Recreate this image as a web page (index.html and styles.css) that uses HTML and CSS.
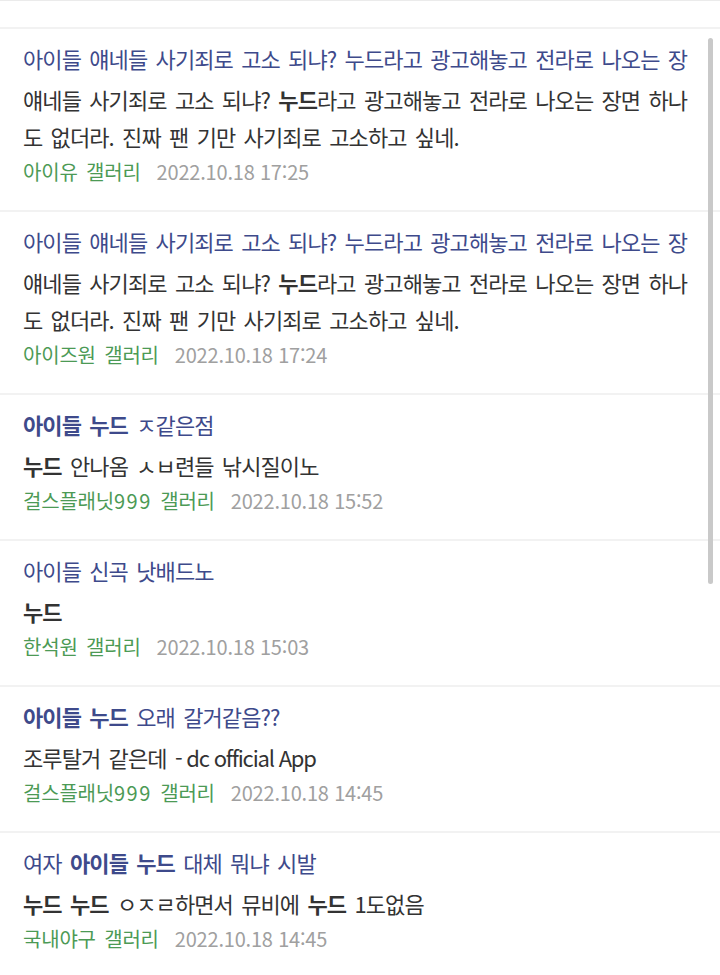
FILE: index.html
```html
<!DOCTYPE html>
<html lang="ko">
<head>
    <meta charset="UTF-8">
    <meta name="viewport" content="width=device-width, initial-scale=1.0">
    <title>검색 결과</title>
    <link rel="stylesheet" href="styles.css">
</head>
<body>
    <div class="top-bar"></div>
    <ul class="result-list">
        <li class="item">
            <p class="tit">아이들 얘네들 사기죄로 고소 되냐? 누드라고 광고해놓고 전라로 나오는 장</p>
            <p class="txt">얘네들 사기죄로 고소 되냐? <b>누드</b>라고 광고해놓고 전라로 나오는 장면 하나도 없더라. 진짜 팬 기만 사기죄로 고소하고 싶네.</p>
            <p class="info"><span class="gall">아이유 갤러리</span><span class="date">2022.10.18 17:25</span></p>
        </li>
        <li class="item">
            <p class="tit">아이들 얘네들 사기죄로 고소 되냐? 누드라고 광고해놓고 전라로 나오는 장</p>
            <p class="txt">얘네들 사기죄로 고소 되냐? <b>누드</b>라고 광고해놓고 전라로 나오는 장면 하나도 없더라. 진짜 팬 기만 사기죄로 고소하고 싶네.</p>
            <p class="info"><span class="gall">아이즈원 갤러리</span><span class="date">2022.10.18 17:24</span></p>
        </li>
        <li class="item">
            <p class="tit"><b>아이들 누드</b> ㅈ같은점</p>
            <p class="txt"><b>누드</b> 안나옴 ㅅㅂ련들 낚시질이노</p>
            <p class="info"><span class="gall">걸스플래닛<span class="num">999</span> 갤러리</span><span class="date">2022.10.18 15:52</span></p>
        </li>
        <li class="item">
            <p class="tit">아이들 신곡 낫배드노</p>
            <p class="txt"><b>누드</b></p>
            <p class="info"><span class="gall">한석원 갤러리</span><span class="date">2022.10.18 15:03</span></p>
        </li>
        <li class="item">
            <p class="tit"><b>아이들 누드</b> 오래 갈거같음??</p>
            <p class="txt">조루탈거 같은데 <span class="app">- dc official App</span></p>
            <p class="info"><span class="gall">걸스플래닛<span class="num">999</span> 갤러리</span><span class="date">2022.10.18 14:45</span></p>
        </li>
        <li class="item">
            <p class="tit">여자 <b>아이들 누드</b> 대체 뭐냐 시발</p>
            <p class="txt"><b>누드 누드</b> ㅇㅈㄹ하면서 뮤비에 <b>누드</b> 1도없음</p>
            <p class="info"><span class="gall">국내야구 갤러리</span><span class="date">2022.10.18 14:45</span></p>
        </li>
    </ul>
    <div class="scroll-thumb"></div>
</body>
</html>
```

FILE: styles.css
```css
* { margin:0; padding:0; box-sizing:border-box;}
ul,ol,li { list-style:none;}

body { background:#fff; font-family:"Noto Sans CJK KR", "Noto Sans", sans-serif; color:#333; position:relative;}

.top-bar { height:27px; border-top:1px solid #ebebeb;}

.item { border-top:2px solid #f2f2f2; padding:10px 22px 21px 23px;}
.item b { font-weight:700;}

.tit { height:38px; line-height:38px; overflow:hidden; word-break:break-all; font-size:22px; letter-spacing:-0.9px; word-spacing:3px; color:#3e4a8b;}
.txt { margin-top:4px; line-height:37px; word-break:break-all; font-size:22px; letter-spacing:-0.9px; word-spacing:3px; color:#333;}
.txt .app { letter-spacing:-1.2px; word-spacing:0;}
.info { line-height:34px; font-size:20px;}
.gall { color:#4c9a55; margin-right:16px; letter-spacing:-0.2px; word-spacing:3px;}
.gall .num { letter-spacing:1.5px;}
.date { color:#a0a0a0; letter-spacing:-0.2px;}

.scroll-thumb { position:absolute; right:7px; top:38px; width:5px; height:546px; background:#c9c9c9; border-radius:3px;}
```
